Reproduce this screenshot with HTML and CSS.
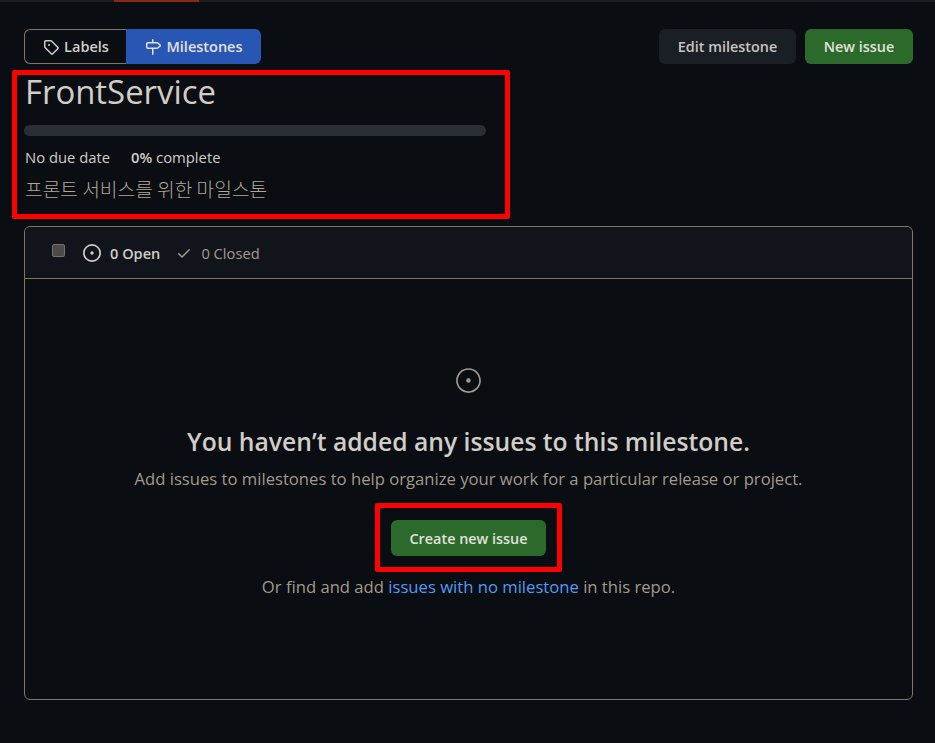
FILE: index.html
```html
<!DOCTYPE html>
<html lang="en">
<head>
<meta charset="utf-8">
<title>FrontService</title>
<link rel="stylesheet" href="styles.css">
</head>
<body>
<div class="topline"><div class="toptab"></div></div>
<main class="page">
  <div class="actions">
    <nav class="segmented">
      <a class="seg seg-labels">
        <svg class="ic" viewBox="0 0 16 16" width="16" height="16"><path fill="currentColor" d="M1 7.775V2.75C1 1.784 1.784 1 2.75 1h5.025c.464 0 .91.184 1.238.513l6.25 6.25a1.75 1.75 0 0 1 0 2.474l-5.026 5.026a1.75 1.75 0 0 1-2.474 0l-6.25-6.25A1.752 1.752 0 0 1 1 7.775Zm1.5 0c0 .066.026.13.073.177l6.25 6.25a.25.25 0 0 0 .354 0l5.025-5.025a.25.25 0 0 0 0-.354l-6.25-6.25a.25.25 0 0 0-.177-.073H2.75a.25.25 0 0 0-.25.25ZM6 5a1 1 0 1 1 0 2 1 1 0 0 1 0-2Z"/></svg>
        <span>Labels</span>
      </a>
      <a class="seg seg-milestones">
        <svg class="ic" viewBox="0 0 16 16" width="16" height="16"><path fill="currentColor" d="M7.75 0a.75.75 0 0 1 .75.75V3h3.634c.414 0 .814.147 1.13.414l2.07 1.75a1.75 1.75 0 0 1 0 2.672l-2.07 1.75a1.75 1.75 0 0 1-1.13.414H8.5v5.25a.75.75 0 0 1-1.5 0V10H2.75A1.75 1.75 0 0 1 1 8.25v-3.5C1 3.784 1.784 3 2.75 3H7V.75A.75.75 0 0 1 7.75 0Zm4.384 8.5a.25.25 0 0 0 .161-.06l2.07-1.75a.248.248 0 0 0 0-.38l-2.07-1.75a.25.25 0 0 0-.161-.06H2.75a.25.25 0 0 0-.25.25v3.5c0 .138.112.25.25.25h9.384Z"/></svg>
        <span>Milestones</span>
      </a>
    </nav>
    <div class="buttons">
      <a class="btn btn-dark">Edit milestone</a>
      <a class="btn btn-green">New issue</a>
    </div>
  </div>

  <section class="milestone">
    <h1 class="title">FrontService</h1>
    <div class="progress"></div>
    <div class="meta"><span>No due date</span><span><b>0%</b> complete</span></div>
    <p class="desc">프론트 서비스를 위한 마일스톤</p>
  </section>

  <section class="box">
    <header class="box-head">
      <span class="check"></span>
      <span class="tab tab-open">
        <svg viewBox="0 0 16 16" width="18" height="18"><path fill="currentColor" d="M8 9.5a1.5 1.5 0 1 0 0-3 1.5 1.5 0 0 0 0 3Z"/><path fill="currentColor" d="M8 0a8 8 0 1 1 0 16A8 8 0 0 1 8 0ZM1.5 8a6.5 6.5 0 1 0 13 0 6.5 6.5 0 0 0-13 0Z"/></svg>
        <b>0 Open</b>
      </span>
      <span class="tab tab-closed">
        <svg viewBox="0 0 16 16" width="16" height="16"><path fill="currentColor" d="M13.78 4.22a.75.75 0 0 1 0 1.06l-7.25 7.25a.75.75 0 0 1-1.06 0L2.22 9.28a.751.751 0 0 1 .018-1.042.751.751 0 0 1 1.042-.018L6 10.94l6.72-6.72a.75.75 0 0 1 1.06 0Z"/></svg>
        <span>0 Closed</span>
      </span>
    </header>
    <div class="blank">
      <svg class="blank-ic" viewBox="0 0 24 24" width="27" height="27"><path fill="currentColor" d="M12 1c6.075 0 11 4.925 11 11s-4.925 11-11 11S1 18.075 1 12 5.925 1 12 1ZM2.5 12a9.5 9.5 0 0 0 19 0 9.5 9.5 0 0 0-19 0Zm9.5 2a2 2 0 1 1-.001-3.999A2 2 0 0 1 12 14Z"/></svg>
      <h2 class="blank-title">You haven’t added any issues to this milestone.</h2>
      <p class="blank-text">Add issues to milestones to help organize your work for a particular release or project.</p>
      <a class="btn btn-green btn-create">Create new issue</a>
      <p class="blank-text blank-last">Or find and add <a class="link">issues with no milestone</a> in this repo.</p>
    </div>
  </section>
</main>
<div class="mark mark-a"></div>
<div class="mark mark-b"></div>
</body>
</html>
```
FILE: styles.css
```css
* { box-sizing: border-box; }
html, body { margin: 0; height: 100%; }
body {
  background: #0a0d12;
  color: #d1cdc7;
  font-family: "Open Sans", "Noto Sans", "Noto Sans CJK KR", sans-serif;
  font-size: 14.8px;
  overflow: hidden;
  position: relative;
}
.topline { height: 2px; background: #1a1e25; padding-left: 114px; }
.toptab { width: 85px; height: 2px; background: #8a2a12; }
.page { padding: 27px 22px 0 24px; }
.actions { display: flex; justify-content: space-between; height: 35px; }
.segmented { display: flex; height: 35px; }
.seg { display: flex; align-items: center; justify-content: center; gap: 5px; font-weight: 600; font-size: 14.5px; }
.seg-labels { width: 102px; padding-left: 1px; border: 1px solid #7f7566; border-right: 0; border-radius: 6px 0 0 6px; color: #d1cdc7; }
.seg-milestones { width: 135px; padding-left: 1px; background: #2856b3; border-radius: 0 6px 6px 0; color: #e3e1de; }
.buttons { display: flex; gap: 9px; }
.btn { display: flex; align-items: center; justify-content: center; height: 35px; border-radius: 6px; font-weight: 600; font-size: 14.4px; }
.btn-dark { width: 137px; background: #1a1e25; color: #c9c5bf; }
.btn-green { width: 108px; background: #2b6a2a; color: #e3e1de; }
.milestone { padding-top: 5px; height: 162px; }
.title { margin: 0; padding-left: 1px; font-size: 32.9px; font-weight: 400; line-height: 46px; color: #d1cdc7; }
.progress { width: 462px; height: 11px; margin-top: 10px; border-radius: 6px; background: #2a2e35; }
.meta { display: flex; gap: 21px; margin-top: 10px; padding-left: 1px; line-height: 22px; color: #d1cdc7; }
.meta b { font-weight: 600; }
.desc { margin: 10px 0 0; padding-left: 1px; font-size: 19.2px; font-weight: 300; line-height: 22px; color: #b0a799; font-family: "Noto Sans CJK KR", sans-serif; }
.box { height: 474px; border: 1px solid #7f7566; border-radius: 6px; }
.box-head { display: flex; align-items: center; height: 52px; padding: 1px 0 0 27px; background: #11151b; border-bottom: 1px solid #7f7566; border-radius: 6px 6px 0 0; }
.check { width: 13px; height: 13px; margin-top: -5px; margin-right: 18px; background: #4b4b4b; border: 1px solid #76706a; border-radius: 2px; }
.tab { display: flex; align-items: center; gap: 9px; }
.tab-open { color: #d1cdc7; margin-right: 16px; font-size: 14.6px; }
.tab-open b { font-weight: 600; }
.tab-closed { color: #a39a8c; gap: 9px; font-size: 14.7px; }
.blank { display: flex; flex-direction: column; align-items: center; padding-top: 88px; }
.blank-ic { color: #a39a8c; }
.blank-title { margin: 30px 0 0; font-size: 24.7px; line-height: 36px; font-weight: 600; color: #d1cdc7; }
.blank-text { margin: 7px 0 0; font-size: 16.65px; line-height: 24px; color: #a39a8c; }
.btn-create { width: 155px; height: 36px; margin-top: 29px; }
.blank-last { margin-top: 19px; }
.link { color: #539bf5; }
.mark { position: absolute; border: 5px solid #fe0000; border-radius: 2px; }
.mark-a { left: 12px; top: 70px; width: 498px; height: 149px; }
.mark-b { left: 375px; top: 503px; width: 187px; height: 69px; }
```
